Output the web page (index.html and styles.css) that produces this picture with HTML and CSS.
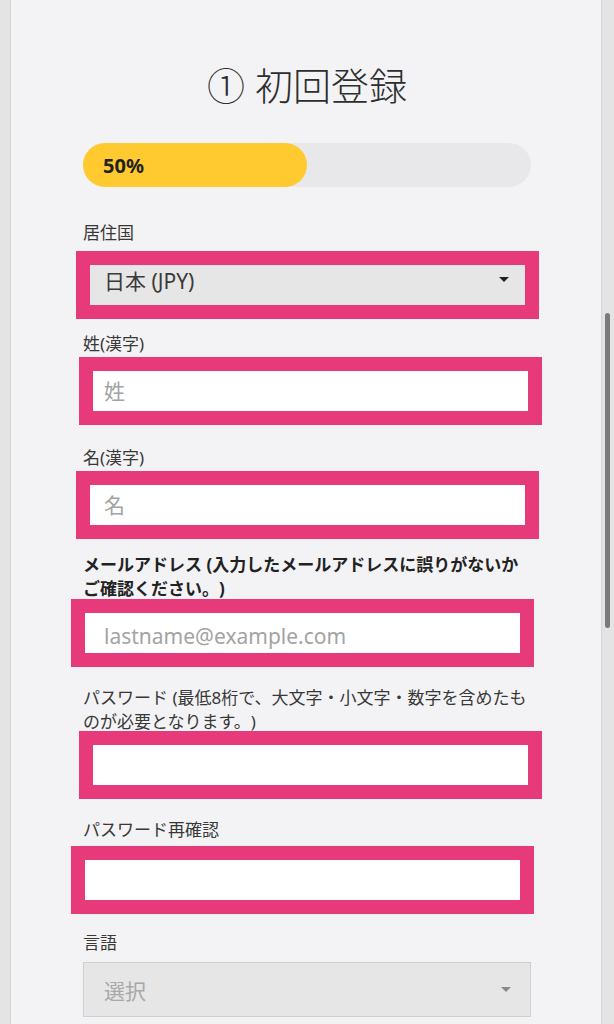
FILE: index.html
```html
<!DOCTYPE html>
<html lang="ja">
<head>
    <meta charset="UTF-8">
    <meta name="viewport" content="width=device-width, initial-scale=1.0">
    <title>初回登録</title>
    <link rel="stylesheet" href="styles.css">
</head>
<body>
    <div class="page">
        <h1 class="title">① 初回登録</h1>

        <div class="progress">
            <div class="progress-fill" style="width: 50%;">50%</div>
        </div>

        <form class="signup">
            <div class="field">
                <label class="field-label">居住国</label>
                <div class="control">
                    <div class="select">日本 (JPY)<span class="caret"></span></div>
                    <span class="mark mark-country"></span>
                </div>
            </div>

            <div class="field field-last">
                <label class="field-label">姓(漢字)</label>
                <div class="control">
                    <input class="input" type="text" placeholder="姓">
                    <span class="mark mark-last"></span>
                </div>
            </div>

            <div class="field field-first">
                <label class="field-label">名(漢字)</label>
                <div class="control">
                    <input class="input" type="text" placeholder="名">
                    <span class="mark mark-first"></span>
                </div>
            </div>

            <div class="field field-email">
                <label class="field-label bold">メールアドレス (入力したメールアドレスに誤りがないかご確認ください。)</label>
                <div class="control">
                    <input class="input" type="email" placeholder="lastname@example.com">
                    <span class="mark mark-email"></span>
                </div>
            </div>

            <div class="field field-pass">
                <label class="field-label">パスワード (最低8桁で、大文字・小文字・数字を含めたものが必要となります。)</label>
                <div class="control">
                    <input class="input" type="password">
                    <span class="mark mark-pass"></span>
                </div>
            </div>

            <div class="field field-confirm">
                <label class="field-label">パスワード再確認</label>
                <div class="control">
                    <input class="input" type="password">
                    <span class="mark mark-confirm"></span>
                </div>
            </div>

            <div class="field field-lang">
                <label class="field-label">言語</label>
                <div class="control">
                    <div class="select select-empty">選択<span class="caret"></span></div>
                </div>
            </div>
        </form>
    </div>

    <div class="scroll-thumb"></div>
</body>
</html>
```

FILE: styles.css
```css
html, body {
    margin: 0;
    height: 100%;
    overflow: hidden;
}
body {
    font-family: "Noto Sans", "Noto Sans CJK JP", sans-serif;
    background-color: #e4e4e4;
    color: #333;
    text-spacing-trim: space-all;
}
.page {
    margin: 0 13px 0 11px;
    min-height: 100%;
    padding: 60px 70px 0 72px;
    background-color: #f3f3f5;
    box-shadow: 0 0 2px rgba(0,0,0,0.18);
}
.title {
    margin: 0;
    font-size: 38px;
    line-height: 50px;
    font-weight: 300;
    text-align: center;
    color: #2e2e2e;
}
.progress {
    margin-top: 33px;
    height: 44px;
    border-radius: 22px;
    background-color: #e8e8ea;
}
.progress-fill {
    height: 100%;
    display: flex;
    align-items: center;
    box-sizing: border-box;
    padding-left: 20px;
    border-radius: 22px;
    background-color: #ffc930;
    font-size: 20px;
    font-weight: 700;
    color: #222;
}
.signup {
    margin-top: 34px;
}
.field-last { margin-top: 25px; }
.field-first { margin-top: 28px; }
.field-email { margin-top: 21px; }
.field-pass { margin-top: 23px; }
.field-confirm { margin-top: 22px; }
.field-lang { margin-top: 27px; }

.field-label {
    display: block;
    margin-bottom: 7px;
    font-size: 17px;
    line-height: 24px;
    color: #383838;
}
.field-label.bold {
    font-weight: 700;
    color: #222;
}
.control {
    position: relative;
}
.input, .select {
    display: flex;
    align-items: center;
    width: 100%;
    height: 55px;
    box-sizing: border-box;
    margin: 0;
    padding: 0 20px;
    border: 1px solid #cfcfcf;
    border-radius: 0;
    background-color: #fff;
    font-family: inherit;
    font-size: 21px;
    color: #333;
    outline: none;
}
.input::placeholder {
    color: #a3a3a3;
}
.select {
    position: relative;
    background-color: #e6e6e6;
    color: #3a3a3a;
}
.select-empty {
    color: #a8a8a8;
}
.caret {
    position: absolute;
    right: 21px;
    top: 50%;
    margin-top: -3px;
    border-top: 5px solid #222;
    border-left: 5px solid transparent;
    border-right: 5px solid transparent;
}
.select-empty .caret {
    border-top-color: #8a8a8a;
    right: 19px;
}

/* pink highlight frames drawn over the fields */
.mark {
    position: absolute;
    width: 463px;
    height: 68px;
    box-sizing: border-box;
    border: 14px solid #e63a7a;
    pointer-events: none;
}
.mark-country { left: -7px; top: -1px; }
.mark-last { left: -4px; top: -6px; }
.mark-first { left: -7px; top: -6px; }
.mark-email { left: -12px; top: -9px; }
.mark-pass { left: -4px; top: -10px; }
.mark-confirm { left: -12px; top: -3px; }

.scroll-thumb {
    position: fixed;
    right: 4px;
    top: 313px;
    width: 5px;
    height: 315px;
    border-radius: 3px;
    background-color: #7a7a7a;
}
```
